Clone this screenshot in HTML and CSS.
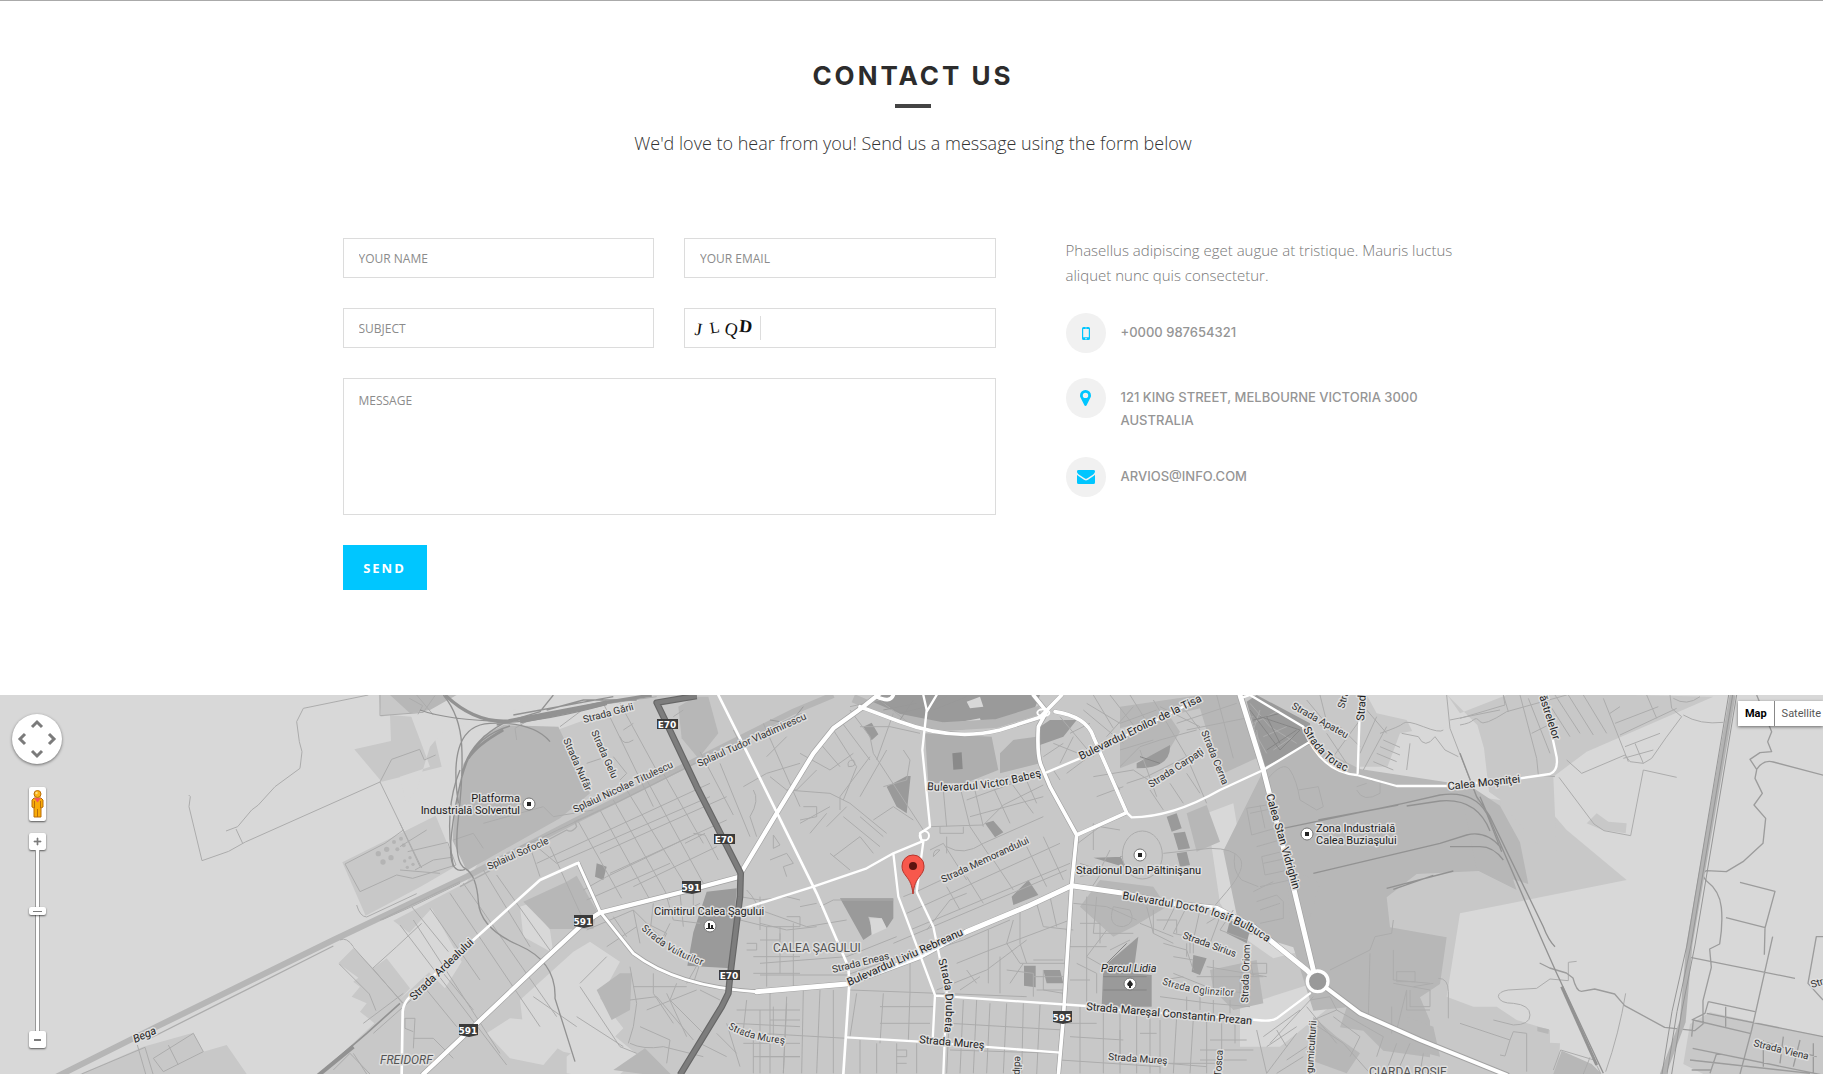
FILE: index.html
```html
<!DOCTYPE html>
<html lang="en">
<head>
<meta charset="utf-8">
<title>Contact Us</title>
<meta name="viewport" content="width=device-width, initial-scale=1">
<link rel="stylesheet" href="styles.css">
</head>
<body>
<main>
<section class="contact">
  <header class="contact-head">
    <h1>Contact Us</h1>
    <p>We'd love to hear from you! Send us a message using the form below</p>
  </header>
  <div class="contact-body">
    <form class="contact-form">
      <input class="field" type="text" aria-label="Your name" placeholder="YOUR NAME">
      <input class="field" type="email" aria-label="Your email" placeholder="YOUR EMAIL">
      <input class="field" type="text" aria-label="Subject" placeholder="SUBJECT">
      <div class="field captcha">
        <svg width="60" height="26" viewBox="0 0 60 26" role="img" aria-label="Captcha code">
          <text class="cap" x="2" y="20" transform="rotate(8 4 14)">J</text>
          <text class="cap cap-small" x="17" y="18" transform="rotate(-8 20 14)">L</text>
          <text class="cap" x="32" y="20" transform="rotate(12 37 14)">Q</text>
          <text class="cap cap-bold" x="46" y="17" transform="rotate(6 50 14)">D</text>
        </svg>
        <input class="captcha-input" type="text" aria-label="Captcha">
      </div>
      <textarea class="field message" aria-label="Message" placeholder="MESSAGE"></textarea>
      <button class="send" type="button">SEND</button>
    </form>
    <aside class="details">
      <p>Phasellus adipiscing eget augue at tristique. Mauris luctus aliquet nunc quis consectetur.</p>
      <ul>
        <li><span class="badge"><svg width="8" height="13" viewBox="0 0 8 13"><path fill="#00c6ff" fill-rule="evenodd" d="M1.500 0h5A1.500 1.500 0 0 1 8 1.500v10A1.500 1.500 0 0 1 6.500 13h-5A1.500 1.500 0 0 1 0 11.500v-10A1.500 1.500 0 0 1 1.500 0zM1.200 2v8.200h5.600V2zM4 10.900a.8.8 0 1 0 0 1.600.8.800 0 0 0 0-1.600zM3 .8v.4h2V.8z"/></svg></span><span class="detail">+0000 987654321</span></li>
        <li><span class="badge"><svg width="11" height="16" viewBox="0 0 11 16"><path fill="#00c6ff" fill-rule="evenodd" d="M5.500 0A5.400 5.400 0 0 1 11 5.400c0 1-.2 1.600-.5 2.200L6.600 15.200a1.200 1.200 0 0 1-2.200 0L.5 7.600C.2 7 0 6.400 0 5.400A5.400 5.400 0 0 1 5.500 0zm0 2.700a2.700 2.700 0 1 0 0 5.400 2.700 2.700 0 0 0 0-5.400z"/></svg></span><span class="detail">121 KING STREET, MELBOURNE VICTORIA 3000 AUSTRALIA</span></li>
        <li><span class="badge"><svg width="18" height="14" viewBox="0 0 18 14"><path fill="#00c6ff" d="M1.500 0h15A1.500 1.500 0 0 1 18 1.600c0 1.200-.8 2.100-1.800 2.800l-5.300 3.700c-.6.400-1.300.9-1.900.9s-1.300-.5-1.900-.9L1.800 4.400C1 3.800 0 2.700 0 1.700A1.600 1.600 0 0 1 1.500 0zM0 4.700c.3.400.7.700 1.100 1l5.200 3.600c.8.600 1.700 1.200 2.700 1.200s1.900-.6 2.700-1.200l5.200-3.600c.4-.3.800-.6 1.100-1v7.700A1.600 1.600 0 0 1 16.400 14H1.600A1.600 1.600 0 0 1 0 12.400z"/></svg></span><span class="detail">ARVIOS@INFO.COM</span></li>
      </ul>
    </aside>
  </div>
</section>

<section class="map" aria-label="Map">
<svg class="map-canvas" viewBox="0 0 1823 379" preserveAspectRatio="xMidYMid slice">
<defs>
  <path id="p-vul" d="M641 234Q668 260 706 272L726 278"/>
  <path id="p-mur" d="M728 333Q745 345 786 349L806 351"/>
  <path id="p-bab" d="M927 95Q985 99 1044 80L1074 70"/>
  <path id="p-dru" d="M938 265Q950 300 944 338L940 368"/>
  <path id="p-bul" d="M1122 204L1200 217Q1240 228 1267 247L1297 270"/>
  <path id="p-ogl" d="M1162 289Q1190 300 1236 301L1256 301"/>
  <path id="p-tor" d="M1303 34Q1320 68 1350 78L1380 86"/>
</defs>
<g transform="translate(0 -5) scale(.333333)" fill="none">
  <path fill="#d8d8d8" d="M0 0h5469v1160H0z"/>
  <!-- built-up land -->
  <g fill="#c8c8c8">
    <path d="M1135 0h220l20 30-110 35-95 10-27 5zM1170 75l120 10 35 145-180 45-82-97 110-25zM1027 517l280-140 50 120 5 35-95 55-170 90z"/>
    <path d="M240 1152l190-82 150-42 30 57 70-20 60 87zM1015 820l45-45 60 60 40-30 70 90-100 110-50-40 20-25-45-20 25-30-20-15 15-12z"/>
    <path d="M960 1152l370-345-150-115 220-115 280-460L1960 15H4100l30 55 90 20 20 40-40 70 20 90 420 60 60 70 180 150-500 100-40 250 80 30 70 0 60 40 100 30v38l30 2-6 110 210 30v20z"/>
    <path d="M4380 70l140-55h380l240 5-380 165-100 75 10 230-60-30-80-90-28 0v-40l-35-25-15-130-20-70-90-90zM4760 400l30-30 35 25 55 5-3 30-70-10zM5110 1152l-60-30 20-120 60-35 350 75v110zM4390 60z"/>
  </g>
  <!-- open ground inside the town -->
  <g fill="#d8d8d8">
    <path d="M1200 15h300l100 15-140 70-120 10-50 60-40 130-30 40-20-80 90-30-60-160zM1560 930l160-145 50-30 90 60-60 110 70 90-90 90-90-20-120-70zM1460 1030l70-45 110 10 50 60-60 70-100-20zM1200 760l95-105 90 160-50 80zM1700 1100l110-90 110 90-80 70-140-20zM1560 650l30-10 60 80 10 70-90-50z"/>
    <path d="M3620 370l80-30 20 120-30 70 50 60 60 30-40 100-60-20-40-60zM3790 730l110-45 40 90-120 30-100-70zM3720 950l250-80 20 80-150 120-120 0zM4000 790l100-60 20 100-80 60zM4080 230h110l-35 105-70 0zM4200 130l110-20 70 10v220l-60 30-180-80zM4100 960l50-15 70 80-100-10z"/>
  </g>
  <!-- industrial land -->
  <g fill="#b7b7b7">
    <path d="M1400 542l-42-90 5-90 27-140 60-85 60-32 165 5 95 200-90 75zM1570 635l130-60 30-18 60 105-10 55-130 0zM1790 900l70-50 35 0-5 110-55 30-30-60z"/>
    <path d="M2035 50l50-30 40 0 30 110-60 75-50-60z"/>
    <path d="M3790 242l130-85 160 80 330 50 90 60 60 110 25 125-135-40-200 10-90 70 10 90 170 30-20 140-60 40 30 70 0 110-140-20-60-60-70-10 20-60-100 10-60-190-160-50-50-240z"/>
    <path d="M3360 140l140-75 40 60-30 50-150 60zM3360 50l240-35h130l60 180-130 60-60-200-240 60zM3240 650l60-80 160 20 40 60-100 60-60 30z"/>
    <path d="M3560 370l60-25 40 110-70 30zM3860 530l100 50-30 100-60 20zM3630 840l140-30 20 130-90 20-60-60zM3940 980l70 60 70 50-40 60-110-40zM4220 980l80 30 20 90-80-20z"/>
    <path d="M4380 290l60 40 60 120 50 150-120-60zM4612 1010l35 8-2 14-33-8zM4660 1152l25-70 90 40 30 30z"/>
    <path d="M1170 15h200l-80 45-60 10zM1840 1140l95-65 90 90z"/>
  </g>
  <!-- parks -->
  <g fill="#9a9a9a">
    <path d="M2120 605l90-10-18 240-130-8 18-100zM2520 625h160v60l-20 30-15-30-40-5 15 50-30 20zM2660 290l60-32 12 0-12 112-30-20zM2590 110l25-12 20 35-20 18zM2955 400l25-8 30 35-25 15zM3035 620l50-50 30 45-75 30zM3072 827h35v65l-35-5zM3310 830l105-90-15 110 55 5v95l-150 0z"/>
    <path d="M2620 15h500l-20 50-120 45-120 10-120-10-120-55zM3120 110l30-20 80 0-40 50-70 25zM3740 35l30-20 160 85 5 60-140 70zM3410 220l100-55q5 70-100 70zM3370 500l-10-2 20 35-100-30z"/>
    <path fill="#aeaeae" d="M2775 130l200 10 20 100-100 40-110 0zM3000 190l40-40 70-10 10 80-120 30z"/>
    <path d="M3500 380l30-10 15 45-30 10zM3520 430l35-5 15 50-35 5zM3530 490l30-5 10 40-30 5zM3690 690l60 30-10 40-60-30zM3580 795l40 10-20 50-25-10zM1790 520l30 10-10 40-25-10zM3130 840l50 0 10 40-50 0z"/>
    <path fill="#8a8a8a" d="M2857 190l28-3 3 50-28 2z"/>
    <path fill="#d8d8d8" d="M2610 685h35l15 30-45 20zM2860 100l80-15 5 15-70 15zM2900 35l40-15 10 30-40 5z"/>
  </g>
  <g fill="#b4b4b4"><circle cx="1135" cy="491" r="8"/><circle cx="1160" cy="478" r="8"/><circle cx="1182" cy="456" r="6"/><circle cx="1203" cy="446" r="6"/><circle cx="1149" cy="516" r="8"/><circle cx="1173" cy="503" r="8"/><circle cx="1192" cy="478" r="6"/><circle cx="1211" cy="466" r="6"/><circle cx="1214" cy="513" r="5"/><circle cx="1230" cy="503" r="5"/><circle cx="1222" cy="532" r="5"/><circle cx="1239" cy="523" r="5"/></g>
  <!-- canal -->
  <g stroke="#b6b6b6"><path stroke-width="18" d="M170 1160L470 1010 1000 750 1400 560 1720 395 2100 205 2380 65 2500 15"/><path stroke-width="26" d="M2560 25l140 60 130 25 160-10 130-40"/></g>
  <!-- side streets -->
  <g stroke="#acacac" stroke-width="3" stroke-linejoin="round">
    <path d="M1105 15L910 55l-20 40 8 60 8 30-6 50-75 55-50 55-20 15-42 50-35 13M708 417l20 43M566 315l5 5-4 30 39 162 80-28 50-28L1140 276l125 258M1140 276l35-68 84-30 14 32 34-15M1140 15v62l130-10 35-50M1228 25l40 22-14 26M1035 522l120-62 55-40M1035 522l45 83 110-50 48 10 130-40-25-68-120 28M1245 540l55-30 55-8M1070 645q10 35 30 36l150-70M1145 690l90-40 110 135M1235 650l145-70M1118 835l72-65 75-70M1060 770q-20-30-40-20M1118 835l90 105M1060 772l150 168M1018 822l90 90 20 50M1245 985h-30v30l25 10M1245 985l-5 90M1090 1000l120-90M1120 1030l130-115M245 1152l190-80 24 80M412 1065l25 87M460 1105l120-75 30 55-120 60zM505 1065l30 60M1000 1140l50-50 60 62M1060 1090l40 62M1240 1045h60l60 60M1280 900l90 110M1330 850l90 110"/>
    <path transform="translate(1200)" d="M250 540l140 230M290 555l170 240M90 655l150 215M40 690l260 400M0 705l320 420M150 610l270 400M190 580l280 400M390 470l30 90M360 470l50-20 170-80M410 520l520-240M450 470l100 220M535 395l130 230M600 360l150 270M640 330l170 300M680 300l180 290M740 270l170 310M790 250l120 210M410 470l60 50 460-200M600 490l380-170M630 550l350-160M700 590l250-120M550 600l70-40 250-120M560 630l250-110M610 40l150 310M660 40l120 220M480 110l80-60 210-30M560 220l60-20M640 200l40 50-20 20M670 120l30-20 M660 140q10 30 40 10M850 60l-30 20M900 185l100 190M960 220l90 220M880 430l35 5 40 75M855 460l60-30M1000 120l30 60M1030 290l70-40 100-30M1100 200l60-60M1090 100l110 250M1060 300q20 30-10 80l20 60M1120 435l20 30-20 10zM1110 510l50-20 20 30-30 10 10 30M350 150l-5-35 50-30M160 450l60-20 30 45M0 540l120 10M50 15l50 60M0 400l60 130M80 420L0 470M250 400l180-50 30 30 120-20"/>
    <path transform="translate(1200)" d="M560 720l140-60 20 100M620 770l90-60M700 660l110 110M640 680l40 60M760 640l-10 90M800 620l20 70 80 10M840 610l10 100M880 600v80M900 640l-60 30M740 700l60 30-20 40M810 700l-30 60M690 830l20 110-10 70-15 50M760 850v60l60 90M700 890h160M800 910l60 130M830 880l-20 50 100 100M690 930l80-10 110 130M860 880l40-70M900 820l-20 60M720 1010l90 40-10 70M740 960l150-60M690 1060q40 20 100 10l120 30M900 900l60 30M980 1000l40 130M1010 960h190M1040 930l-10 90M1080 960v190M1120 950v100M1160 940l-10 210M1000 1000l200 10M1030 1060h170M1060 1100h140M1020 620l60 10 80-10 40 10M1040 600q30 30 40 70M1020 690l80 20h100M1080 620v100M1100 710v180M1140 710v140M1180 700v190M1060 800h140M1060 850h140M1040 760h30v20h-30M540 890l120 180 50 20M620 800l-80 80M400 920l130 90M1060 1050v100M530 980l140 90M950 1030l60 60M900 1060l80 40"/>
    <path transform="translate(2280)" d="M270 60l60 80 10 50 150 230M240 90l90 120M220 120l70 110M270 50l90-20 100 80M400 70l-50 140M300 110l90 0 90 20M30 260l50 40 130 10 60 30 110 90M170 240l-60 60-30 0M120 190l90 50 70-50M180 160l60 70M290 230l-40 100M330 200l-90 120 0 40M380 180l-80 140M130 350h40v30l-50 10M120 400l90-50M150 430l50-60M200 410l60-60M220 500l80-60 40 50M250 380l110 90M210 490l60 50M340 390l60-40 60 40M300 380l70 60M280 210q-20 0-15 20 30 0 15-20M430 180l20 30-10 60-70 20"/>
    <path transform="translate(2280)" d="M510 410l160-5 60-60 120-60M550 300l10 110M600 290l30 120 60 90M640 280l30 130M690 270l60 130M740 260l80 110M790 250l40 90M620 330l220-80M630 380l220-60M560 470q50 30 110-10l180-80M510 480l40-20 70 110M520 500q0-25 20-20l-20 20M430 620l50-20 300-140M440 670l460-210M450 720l480-200M400 760l520-220M560 590l40 70M620 560l50 80M500 720l70-90 50-20M700 510l60 90M800 470l60 120M850 440l60 130M540 410v20h70v-20M560 440v50M550 770l60-20 140-60M590 820l100-40 240-90M530 900l150-60 120-90M685 720v160M600 900l60-40 M620 840l30 40M720 800v110M780 660v100l20 60M830 640l20 70 90 10M870 620l20 90M760 690l-20 70 40 60h140M740 840l80 10v70M820 810h90M820 860h90M830 900h80M850 840v60l60 10M750 880l40-60"/>
    <path transform="translate(2280)" d="M0 820l260-20 150-60M0 855l260 0 230-80M270 900l530 20M30 900v250M80 920l-10 230M130 900l-5 250M180 900l-10 250M220 900v250M30 990h90M0 1030l260 15M0 1100h120M290 910l-20 130M370 910l-10 150M450 910l-5 140M360 950h160M360 1000h150M300 1050v100M350 1060v90M410 1060v90M470 1060v90M410 1080h30v20h-30M410 1120h30M570 930l-10 220M610 930l-10 220M650 930l-10 220M690 940l-10 210M740 940l-10 210M790 940l-5 210M840 945l-10 210M570 1000l340 20M570 1080l330 10M0 700l80 20 90-10M80 680h40v30M120 650l50-10M0 750h60v-20M180 650l40-20h180M0 660l140 50 120-20M450 800v110"/>
    <path transform="translate(2280)" d="M900 80l100 120M930 130l60-30M880 160l100 40M850 200l60-40M900 220l40-80M920 250l80-60M980 40l100 60 110-40M1000 15l60 100M1050 15l70 90M1110 15l50 80M970 60l120 100M1040 140l80-90M1080 180l100-30M880 240l20 30M1000 260l120-20 60 40M1010 320l80-30M1040 240l40 60M940 470l80-60 60 10M960 520l60 20 30-60M1000 400v80M960 560l90-20M990 600l40-60M980 620v320M940 640l100 10 90 40M1010 620l-10 110h120M1060 650q-20 60 30 60 40-10 20-50zM1040 720l-60 80 70 40M960 700h60v60M930 770h110M950 820l60 30v60M930 870h60M1050 780l60-30M920 1000h90M960 950v200M1030 960v190M1080 970v180M1130 970v180M1170 980v170M930 1040l160 10M900 1110l300 20"/>
    <ellipse cx="3427" cy="495" rx="60" ry="72"/>
    <path transform="translate(3360)" d="M0 230l60-60 60-20 110-30M20 280l60-20 160-80M90 300l40 60M150 280l40 60M200 250l40 60M60 180l50 140M100 30l100 170 60 140M120 50l120 60M150 70l100-40M170 100l180-60M200 120l200-40M180 40l60 80M290 15l50 190M130 490l140-15q70 0 90 30t-40 100-40 50M345 490q-10 50 20 80l50 20M380 355l60-10M380 355l15 80 70-20M420 345l15 70M390 370l70-15M425 500l60-15M425 500l10 55 70-15M430 520l70-15M420 590l90-20M400 605l60-30M410 470l70-20M420 660l60-20M420 700l70-15v-50l-20-20-60 20M440 270q50-60 70-30t30 90l50 30 20-10-15-60-60 10M390 40l60 70 80 50M420 60l-20 60 40 70M400 100l80-40M430 140l70-30M460 180l60-40M420 180l-10-60"/>
    <path transform="translate(3360)" d="M590 160l40 60M620 130l60 90M640 200l80-110M590 100l90 50M560 30l50 60M600 15l20 80M660 110l60 60M740 60l60 70M770 80l-50 110M800 110l-70 130M770 190l60 25M780 170l60 25M790 150l50 22M760 215l60 25M780 130q60-20 70-30t60 10 60 10M845 130l50 10q20 40 50 0l30 40 40 20M980 15l10 100 85 220M990 90l150-30M870 160l-10 80M710 290l30-10M740 260l20 15M710 300q20 40 70 10v-40M630 840l120-60 15-40 50-10 5-40M750 790l-5 190M820 780v90l110 10M830 845h55v30h-55zM820 880l110 20v50h-60v-50M815 950v80M860 900v60h70M955 865q30 0 30 40v80M940 880l-60 10M830 1020l30-120"/>
    <path transform="translate(3360)" d="M170 640l-40 80M200 650l-40 80 90 20M100 660v70l60 30M80 650l20 80M110 690h60v40M240 660l-20 90M60 700l100 40M130 760l70 20 20 60M200 760v40M210 750v40M220 750v40M160 800l60 10M260 700l50-30M300 680l-30 80M340 660l-40 60 80 30M380 760l20 100M260 830l180 30M230 860h200M280 810v90M300 900l80 10M160 850l100 40M120 920l150 20 120 10M130 870l60-10M200 920v40M240 920v40M280 930v40M330 930v40M360 860v80M390 820h50v30h-50M120 990v160M170 980l-10 170M220 985l-10 165M260 990v160M305 1000v90M345 1000v60M240 1080h160M240 1110h140M60 1030l50 0M0 1020v100M20 1110l240 20M100 1120h200M270 1050h110M410 1020l30 130 90-120M440 1070l90-60M430 1040l110-80M450 1060l130-140M470 1020l30 50M570 930l60-10 20 40-70 30M560 950l90 110M640 980l80 60-30 60M580 1000l90 60 80 90M650 960l140 80 -20 60M500 1110l60-40M470 1150l80-50M830 1060l-30 80M870 1060l-40 90M910 1090l-10 60"/>
    <path transform="translate(4380)" d="M0 105q30-5 40-15t20 5 80-30l180-50M0 85l135-40-5-30 15 50M180 15l50 190 5 50 50 5M215 130l60-30M205 25l65 165M250 15l80 125M285 15l75 115M325 15l75 120M370 15l70 115M430 25l75 190M480 135l170-80M465 100l130-50M495 170l105-40M450 70l30-20M560 15l30 70M525 160l25 60-40-5-15-20-130 55-45-40M550 220l25-15q40-60 90-125l-30-25-5-40M490 205l90-25M550 240l100 22M550 240l-38 197-80-15-30-20-105-140M670 75q50 30 120 22M640 25q40 25 80-5M0 1000l150 50 10-25 40 5v115M150 1050l-15 48-15-3M280 1140l22-60 100 30 20 40M370 1152l20-50M100 990l60 15q50 0 50-30t-50-35q-40 0-45-20 0-15 30-20l85-5 40-28 55 5v-55l25-3M497 910q-20 120-60 235"/>
    <path transform="translate(4380)" stroke="#9c9c9c" stroke-width="4" d="M890 15l45 110-12 30 12 30-35 3-30 20 20 30q20-30 50-22l190 50M890 240l-5 25 22 45-25 35 35 40-8 75-60 55-50 30-60-3q-20 10 0 30 40 30 45 80t-5 110l-30 15 5 55-25 100v70l-25 20-90-10-120-65-30-35-60-15-40 7q-15 0-25-40l-20-15-50-15-30-15M840 577l105 27-30 110-2 80M798 683l118 30M680 800l325 65M938 740L875 1020l-35 132M1089 740l-20 0-25 140 45 50M700 990l-5 50M745 935l140 30M745 935l-10 35-40 20M740 970l350 70M700 990l170 40M698 1075l390 80M690 1110l360 40M890 1050l180 50M797 950v60M910 1050v80M970 1040l-10 80M1020 1050l-20 80M1060 1060v90M770 1090l-20 60M695 1140h60"/>
    <path transform="translate(1200)" stroke="#999" d="M1110 90l60 10 40-50M1440 30l60 40 80-20 60-30M1450 60l100-20M1500 90l40-60M1600 60l100-40"/>
    <path transform="translate(3360)" stroke="#868686" d="M390 60l90 120 60-60-120-40M440 80l40 80M400 90l80-20M440 180l90-60M-50 860h130M-50 900h130M20 760l-60 60M60 200l60 20"/>
  </g>
  <!-- railways -->
  <g stroke="#929292" stroke-width="4">
    <path transform="translate(1200)" d="M135 15q90 85 190 78l290-55 140-23" stroke-width="10"/>
    <path transform="translate(1200)" d="M290 98q130 0 330-55M340 75l300-55M440 60l110-30h160M60 60q80 30 260 35M130 15q50 60 55 150t-10 220 20 150 40 100 120 130 110 160l60 190M450 155q-50-60-180-55t-95 240M310 100q-110 60-125 160M330 108q-100 30-130 110t-45 210 40 110M460 15l-40 50-130 40"/>
    <path d="M1820 38l-80 18-180 38" stroke-width="14"/>
    <path transform="translate(1200)" d="M205 205q25-40 105-85" stroke-width="8"/>
    <path d="M1380 240q-50 120-20 290"/>
    <path d="M1200 940l-100 90-140 120" stroke-width="5"/><path d="M1060 1070l-110 90" stroke-width="12"/>
    <path transform="translate(3360)" d="M490 415l360-75 110-25q100-15 140 55l45 115M595 390l240-45M860 348l100-15q110-10 150 90M580 550l380-90 80-25q60-15 105 40M800 595l200-52M820 598l120-42M990 470h90q40 0 70 40"/>
    <path transform="translate(4380)" d="M0 190l50 130 40 60 160 330q15 40 35 60M60 320l190 440 40 90 140 300"/>
    <path d="M4685 890l105 235" stroke-width="9"/>
  </g>
  <g stroke="#b3b3b3"><path d="M5198 15l-130 750-20 230-60 160" stroke-width="18"/><path stroke="#969696" stroke-width="3" d="M5186 15l-125 750-45 200-30 187M5210 15l-125 750-40 200-30 187M5198 15l-125 750-42 200-30 187"/></g>
  <path stroke="#adadad" stroke-width="4" d="M440 1050L1000 768M1140 690l240-115M1380 590l320-170q15 10 30-10l-5-15 120-55 300-150 260-120"/>
  <!-- outlines of the wide streets -->
  <g stroke="#a2a2a2" stroke-linejoin="round" stroke-linecap="round">
    <path stroke-width="17" d="M2222 550l108-180 110-180 60-75 90-65 50-40M1270 1152l50-47 290-275 140-130 50-32 270-68 150-40"/>
    <path stroke-width="13" d="M1735 520l65 145 100 125q130 100 370 115"/>
    <path stroke-width="18" d="M2270 905l270-23 220-82 140-75 180-75 135-63 145 21 150 32 140 15 110 55 160 130 33 34 127 96 180 80 260 105"/>
    <path stroke-width="19" d="M3720 15l70 225 90 350 60 250"/>
    <path stroke-width="15" d="M3100 15l40 50-25 45q-5 90 10 120l25 60 80 145-15 150-25 400-15 170"/>
    <path stroke-width="13" d="M2580 50l120 45q160 60 300 25l120-38 65-67M3230 435l150-67-100-228q-20-60-115-75"/>
  </g>
  <g stroke="#fff" stroke-linejoin="round" stroke-linecap="round">
    <path stroke-width="13" d="M2222 550l108-180 110-180 60-75 90-65 50-40M1270 1152l50-47 290-275 140-130 50-32 270-68 150-40"/>
    <path stroke-width="9" d="M1735 520l65 145 100 125q130 100 370 115"/>
    <path stroke-width="15" d="M2270 905l270-23 220-82 140-75 180-75 135-63 145 21 150 32 140 15 110 55 160 130 33 34M3720 15l70 225 90 350 60 250"/>
    <path stroke-width="12" d="M3953 874l127 96 180 80 260 105"/>
    <path stroke-width="11" d="M3100 15l40 50-25 45q-5 90 10 120l25 60 80 145-15 150-25 400-15 170M2580 50l120 45q160 60 300 25l120-38 65-67M3230 435l150-67-100-228q-20-60-115-75M2630 20q40 20 50-5"/>
    <path stroke-width="8" d="M2155 15l125 250 170 345 95 220 3 50-18 272M1735 518l-115 52-200 180-190 170q-20 20-22 45l-3 187"/>
    <path stroke-width="7" d="M2770 15l10 45-13 120 23 230-30 20 5 25-85 35-80 45-160 55-240 75M2810 15l-30 50M2680 490l15 130 110 295-7 135M2770 455l-20 150 50 105 40 195-10 247M2807 917l453 31 100 12 410 30q45 5 60-5l100-75M2540 1042l220 13 420 33M3140 247l100-42 180-90 180-90M3380 368l15 14q120 0 265-82l130-60 140-85-20-45-160-95-30 10M3910 115q50 130 160 140l120 33 150 0 220-23 90-13q25-10 20-50l-15-70-30-110M4080 40l-7 210"/>
    <ellipse cx="2773" cy="437" rx="14" ry="14" stroke-width="6"/><ellipse cx="3130" cy="68" rx="18" ry="10" stroke-width="6"/>
    <circle cx="3953" cy="874" r="31" fill="#999" stroke-width="10"/>
  </g>
  <!-- motorway -->
  <g stroke-linejoin="round"><path stroke="#666" stroke-width="20" d="M2090 18l-120 20 30 62 90 190 132 260-2 70-30 240-5 50-20 40-125 205"/><path stroke="#7d7d7d" stroke-width="13" d="M2090 18l-120 20 30 62 90 190 132 260-2 70-30 240-5 50-20 40-125 205"/></g>
</g>
<!-- road shields -->
<g class="shields">
  <path d="M657 24h21v10h-21zM714 139h21v10h-21zM719 275h21v10h-21z"/>
  <path d="M682 186h19v11l-9 2-10-2zM574 220h19v11l-9 2-10-2zM459 329h19v11l-9 2-10-2zM1053 316h19v11l-9 2-10-2z"/>
  <text x="667" y="33">E70</text><text x="724" y="148">E70</text><text x="729" y="284">E70</text>
  <text x="691" y="196">591</text><text x="583" y="230">591</text><text x="468" y="339">591</text><text x="1062" y="326">595</text>
</g>
<g class="labels">
  <text x="520" y="107" text-anchor="end">Platforma</text><text x="520" y="119" text-anchor="end">Industrială Solventul</text>
  <text x="654" y="220">Cimitirul Calea Şagului</text>
  <text x="1076" y="179">Stadionul Dan Păltinişanu</text>
  <text x="1316" y="137">Zona Industrială</text><text x="1316" y="149">Calea Buziaşului</text>
  <text x="1101" y="277" class="it">Parcul Lidia</text>
  <text transform="translate(135 348) rotate(-24)" class="it">Bega</text>
  <text transform="translate(1448 95) rotate(-6)">Calea Moşniţei</text>
  <text transform="translate(1081 65) rotate(-26)">Bulevardul Eroilor de la Tisa</text>
  <text transform="translate(1086 315) rotate(5)">Strada Mareşal Constantin Prezan</text>
  <text transform="translate(919 348) rotate(5)">Strada Mureş</text>
  <text transform="translate(1364 26) rotate(-86)">Strada</text>
  <text transform="translate(1537 -5) rotate(72)">Păstrelelor</text>
  <text transform="translate(414 306) rotate(-44)">Strada Ardealului</text>
  <text transform="translate(849 291) rotate(-24)">Bulevardul Liviu Rebreanu</text>
  <text transform="translate(1266 100) rotate(74)">Calea Stan Vidrighin</text>
  <text><textPath href="#p-bab">Bulevardul Victor Babeş</textPath></text>
  <text><textPath href="#p-dru">Strada Drubeta</textPath></text>
  <text><textPath href="#p-bul">Bulevardul Doctor Iosif Bulbuca</textPath></text>
  <text><textPath href="#p-tor">Strada Torac</textPath></text>
</g>
<g class="labels minor">
  <text transform="translate(584 28) rotate(-15)">Strada Gării</text>
  <text transform="translate(563 45) rotate(66)">Strada Nufăr</text>
  <text transform="translate(591 37) rotate(66)">Strada Gelu</text>
  <text transform="translate(575 118) rotate(-25)">Splaiul Nicolae Titulescu</text>
  <text transform="translate(699 72) rotate(-24)">Splaiul Tudor Vladimirescu</text>
  <text transform="translate(489 175) rotate(-24)">Splaiul Sofocle</text>
  <text transform="translate(833 278) rotate(-14)">Strada Eneas</text>
  <text transform="translate(943 188) rotate(-25)">Strada Memorandului</text>
  <text transform="translate(1151 93) rotate(-33)">Strada Carpaţi</text>
  <text transform="translate(1201 37) rotate(68)">Strada Cerna</text>
  <text transform="translate(1291 13) rotate(29)">Strada Apateu</text>
  <text transform="translate(1344 14) rotate(-74)">Strada</text>
  <text transform="translate(1248 308) rotate(-88)">Strada Oriom</text>
  <text transform="translate(1182 243) rotate(20)">Strada Sirius</text>
  <text transform="translate(1108 365) rotate(4)">Strada Mureş</text>
  <text transform="translate(1753 351) rotate(14)">Strada Viena</text>
  <text transform="translate(1812 293) rotate(-18)">Strada</text>
  <text transform="translate(1221 382) rotate(-86)">Tosca</text>
  <text transform="translate(1312 389) rotate(-86)">Legumiculturii</text>
  <text transform="translate(1015 361) rotate(92)">edip</text>
  <text><textPath href="#p-vul">Strada Vulturilor</textPath></text>
  <text><textPath href="#p-mur">Strada Mureş</textPath></text>
  <text><textPath href="#p-ogl">Strada Oglinzilor</textPath></text>
</g>
<g class="labels district">
  <text x="773" y="257">CALEA ŞAGULUI</text>
  <text x="380" y="369" class="it">FREIDORF</text>
  <text x="1369" y="381">CIARDA ROSIE</text>
</g>
<!-- places -->
<g fill="#fff" stroke="#777" stroke-width="1"><circle cx="529" cy="109" r="6"/><circle cx="710" cy="231" r="6"/><circle cx="1140" cy="160" r="6"/><circle cx="1130" cy="289" r="6"/><circle cx="1307" cy="139" r="6"/></g>
<path fill="#222" d="M527 107h4v4h-4zM1138 158h4v4h-4zM1305 137h4v4h-4zM706 233h8v1h-8zM708 228h2v5h-2zM711 230h2v3h-2zM1130 285l3 4-1 2h-1v2h-2v-2h-1l-1-2z"/>
<!-- pin -->
<path fill="#f7584c" stroke="#b8352c" stroke-width="1" d="M913 199c-1-9-3-13-7-18-3-4-4-6-4-10a11 11 0 0 1 22 0c0 4-1 6-4 10-4 5-6 9-7 18z"/>
<circle cx="913" cy="171" r="4" fill="#5e1410"/>
</svg>

<div class="map-tools">
  <div class="pan">
    <svg width="50" height="50" viewBox="0 0 50 50" fill="none" stroke="#7b7b7b" stroke-width="3"><path d="M20 13l5-5 5 5M20 37l5 5 5-5M13 20l-5 5 5 5M37 20l5 5-5 5"/></svg>
    <button type="button" class="pan-n" aria-label="Pan up"></button>
    <button type="button" class="pan-w" aria-label="Pan left"></button>
    <button type="button" class="pan-e" aria-label="Pan right"></button>
    <button type="button" class="pan-s" aria-label="Pan down"></button>
  </div>
  <button type="button" class="tool pegman" aria-label="Street View"><svg width="13" height="28" viewBox="0 0 13 28"><path fill="#f9ac08" stroke="#b96d08" stroke-width="1" d="M3 8h7l2 2v7l-2 1v9H3v-9l-2-1v-7z"/><path stroke="#b96d08" d="M3.500 11v7M9.500 11v7M6.500 19v8"/><path fill="#f2595c" d="M3 8h7l-3.500 4.500z"/><circle cx="6.500" cy="4" r="3.500" fill="#fbb516" stroke="#b96d08"/><circle cx="5.500" cy="3" r="1.200" fill="#ffe08a"/></svg></button>
  <button type="button" class="tool" aria-label="Zoom in"><svg width="9" height="9" viewBox="0 0 9 9"><path fill="#7b7b7b" d="M1 4h3V1h1v3h3v1H5v3H4V5H1z" stroke="#7b7b7b" stroke-width=".7"/></svg></button>
  <input class="zoom" type="range" min="0" max="100" value="67" aria-label="Zoom level">
  <button type="button" class="tool" aria-label="Zoom out"><svg width="9" height="9" viewBox="0 0 9 9"><path fill="#7b7b7b" d="M1 4h7v2H1z"/></svg></button>
</div>
<div class="map-type">
  <button type="button" class="on">Map</button><button type="button">Satellite</button>
</div>
</section>
</main>
</body>
</html>
```
FILE: styles.css
```css
* { box-sizing: border-box; }
body {
  margin: 0;
  background: #fff;
  color: #777;
  font-family: "Open Sans", "Noto Sans", sans-serif;
}
.contact {
  border-top: 1px solid #aaa;
  padding: 57px 24px 105px;
}
.contact-head {
  padding-left: 3px;
  text-align: center;
  color: #333;
}
.contact-head h1 {
  margin: 0;
  color: #2c2c2c;
  font: 700 26px/36px Inter, sans-serif;
  letter-spacing: 3px;
  text-transform: uppercase;
}
.contact-head h1::after {
  content: "";
  display: block;
  width: 36px;
  height: 4px;
  margin: 10px auto 0;
  background: #444;
}
.contact-head p {
  margin: 21px 0 0;
  font-size: 18px;
  font-weight: 300;
  line-height: 28px;
}
.contact-body {
  display: grid;
  grid-template-columns: 653fr 415fr;
  gap: 70px;
  max-width: 1138px;
  margin: 81px auto 0;
}
.contact-form {
  display: grid;
  grid-template-columns: 1fr 1fr;
  gap: 30px;
}
.field {
  width: 100%;
  min-width: 0;
  height: 40px;
  padding: 0 15px;
  border: 1px solid #dcdcdc;
  border-radius: 0;
  background: #fff;
  color: #444;
  font: 12px/18px "Open Sans", sans-serif;
}
.field::placeholder { color: #8b8b8b; opacity: 1; }
.captcha {
  display: flex;
  align-items: center;
  gap: 7px;
  padding: 0 8px;
}
.cap { font: 18px "Liberation Serif", serif; fill: #111; }
.cap-small { font-size: 16px; }
.cap-bold { font-weight: 700; }
.captcha-input {
  flex: 1;
  min-width: 0;
  height: 24px;
  border: 0;
  border-left: 1px solid #ddd;
  background: none;
}
.message {
  grid-column: 1 / -1;
  height: 137px;
  padding: 13px 15px;
  resize: none;
  display: block;
}
.send {
  justify-self: start;
  width: 84px;
  height: 45px;
  border: 0;
  padding: 0;
  background: #00c6ff;
  color: #fff;
  font: 700 13px/20px "Open Sans", sans-serif;
  letter-spacing: 2px;
}
.details p {
  margin: 0;
  font-size: 15px;
  font-weight: 300;
  line-height: 25px;
}
.details ul {
  display: flex;
  flex-direction: column;
  gap: 25px;
  margin: 25px 0 0;
  padding: 0;
  list-style: none;
}
.details li { display: flex; gap: 15px; align-items: flex-start; }
.badge {
  flex: none;
  display: flex;
  align-items: center;
  justify-content: center;
  width: 40px;
  height: 40px;
  border-radius: 50%;
  background: #f1f1f1;
}
.detail {
  padding-top: 8px;
  font: 500 13px/23px Inter, sans-serif;
  color: #959595;
}
.map {
  position: relative;
  height: 379px;
  overflow: hidden;
  background: #d8d8d8;
  font-family: Roboto, sans-serif;
}
.map-canvas { display: block; width: 100%; height: 100%; }
.labels text {
  font: 11px Roboto, sans-serif;
  fill: #1c1c1c;
  stroke: #dedede;
  stroke-width: 3px;
  stroke-linejoin: round;
  paint-order: stroke;
}
.minor text { font-size: 10px; fill: #333; }
.labels .it { font-style: italic; }
.district text { font-size: 12px; fill: #555; }
.shields path { fill: #3b3b3b; }
.shields text {
  font: 700 9px "DejaVu Sans", sans-serif;
  fill: #fff;
  text-anchor: middle;
}
.map-tools {
  position: absolute;
  top: 19px;
  left: 12px;
  display: flex;
  flex-direction: column;
  align-items: center;
  width: 50px;
}
.pan {
  position: relative;
  width: 50px;
  height: 50px;
  border-radius: 50%;
  background: #fff;
  box-shadow: 0 1px 3px rgba(0, 0, 0, .5);
}
.pan svg { display: block; }
.pan button {
  position: absolute;
  width: 16px;
  height: 16px;
  padding: 0;
  border: 0;
  background: none;
}
.pan .pan-n { top: 0; left: 17px; }
.pan .pan-s { bottom: 0; left: 17px; }
.pan .pan-w { top: 17px; left: 0; }
.pan .pan-e { top: 17px; right: 0; }
.tool {
  display: flex;
  align-items: center;
  justify-content: center;
  width: 17px;
  height: 17px;
  padding: 0;
  border: 0;
  border-radius: 2px;
  background: #fff;
  box-shadow: 0 1px 2px rgba(0, 0, 0, .6);
}
.pegman { height: 34px; margin: 23px 0 12px; }
.zoom {
  appearance: none;
  writing-mode: vertical-lr;
  direction: rtl;
  width: 17px;
  height: 181px;
  margin: 0;
  background: linear-gradient(to right, transparent 6px, #999 6px 7px, #fff 7px 10px, #999 10px 11px, transparent 11px);
}
.zoom::-webkit-slider-thumb {
  appearance: none;
  width: 17px;
  height: 8px;
  border-radius: 2px;
  background: linear-gradient(#7b7b7b, #7b7b7b) center / 9px 1px no-repeat #fff;
  box-shadow: 0 1px 2px rgba(0, 0, 0, .6);
}
.map-type {
  position: absolute;
  top: 6px;
  right: 0;
  display: flex;
  height: 25px;
  background: #fff;
  box-shadow: 0 1px 3px rgba(0, 0, 0, .5);
}
.map-type button {
  padding: 0 2px 0 7px;
  border: 0;
  background: none;
  color: #565656;
  font: 11px Roboto, sans-serif;
}
.map-type .on {
  padding: 0 7px;
  border-right: 1px solid #888;
  color: #000;
  font-weight: 700;
}
```
